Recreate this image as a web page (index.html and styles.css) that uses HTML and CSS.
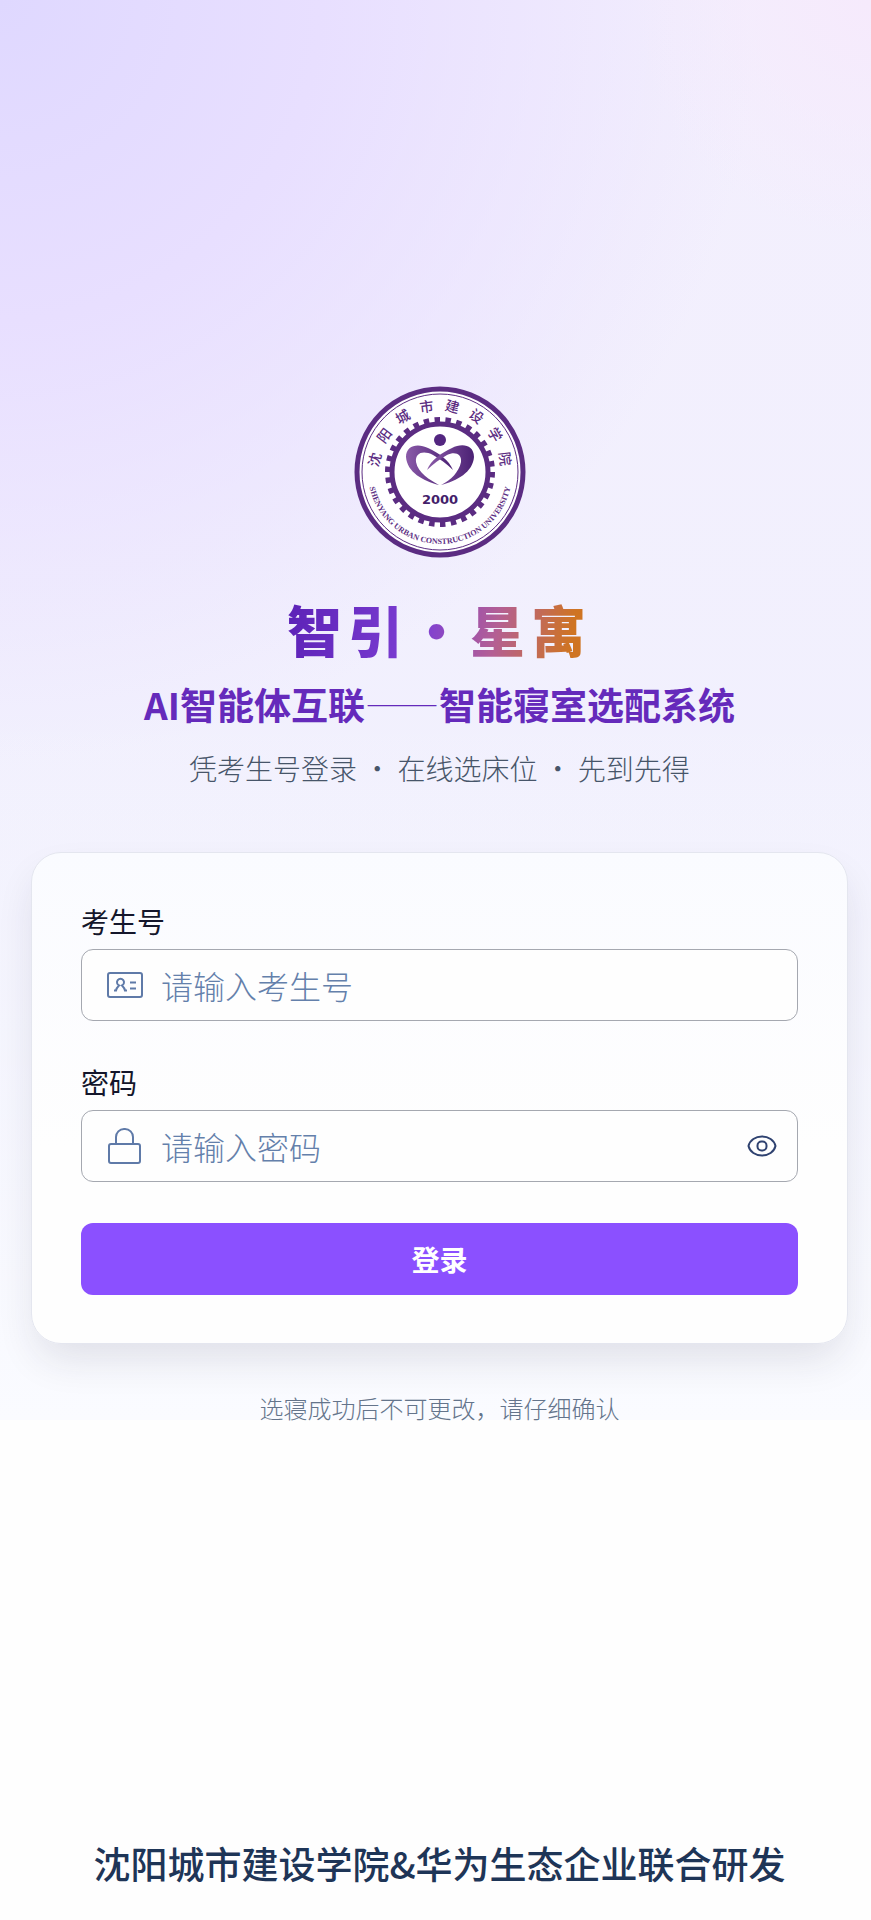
FILE: index.html
```html
<!DOCTYPE html>
<html lang="zh-CN">

<head>
    <meta charset="UTF-8">
    <meta name="viewport" content="width=device-width, initial-scale=1.0">
    <title>智引·星寓</title>
    <link rel="stylesheet" href="styles.css">
</head>

<body>
    <main class="login-page">
        <header class="brand">
            <svg class="brand-logo" viewBox="0 0 172 172" role="img" aria-label="沈阳城市建设学院">
                <defs>
                    <path id="arcTop" d="M 25.5 93.5 A 61 61 0 1 1 146.5 93.5" />
                    <path id="arcBottom" d="M 14 86 A 72 72 0 0 0 158 86" />
                    <linearGradient id="heart" x1="0" y1="0" x2="1" y2="0">
                        <stop offset="0" stop-color="#8a5aa8" />
                        <stop offset="1" stop-color="#4b2174" />
                    </linearGradient>
                </defs>
                <circle cx="86" cy="86" r="83" fill="#fff" stroke="#5b2c82" stroke-width="5" />
                <circle cx="86" cy="86" r="78" fill="none" stroke="#5b2c82" stroke-width="1" />
                <circle class="gear-teeth" cx="86" cy="86" r="52" pathLength="240" />
                <circle cx="86" cy="86" r="48" fill="#fff" stroke="#5b2c82" stroke-width="5" />
                <circle cx="86" cy="54" r="6" fill="#532680" />
                <path fill="url(#heart)" d="M85 99 C69 95 53 86 52 71 C52 59 64 57 74 62 C85 67 95 74 99 84 C93 78 86 73 79 69 C69 64 61 67 62 76 C64 87 76 94 85 99 Z" />
                <path fill="url(#heart)" d="M87 99 C103 95 119 86 120 71 C120 58 107 57 98 62 C87 67 77 74 73 84 C79 78 86 73 93 69 C101 65 108 68 107 76 C105 86 97 94 87 99 Z" />
                <text class="logo-year" x="86" y="118">2000</text>
                <text class="logo-cn"><textPath href="#arcTop" startOffset="52%">沈阳城市建设学院</textPath></text>
                <text class="logo-en"><textPath href="#arcBottom" startOffset="50%">SHENYANG URBAN CONSTRUCTION UNIVERSITY</textPath></text>
            </svg>
            <h1 class="brand-title">智引·星寓</h1>
            <p class="brand-subtitle">AI智能体互联<span class="dash">——</span>智能寝室选配系统</p>
            <p class="brand-desc">凭考生号登录 · 在线选床位 · 先到先得</p>
        </header>

        <form class="login-card">
            <div class="field">
                <label for="examNo">考生号</label>
                <div class="input-box">
                    <svg class="icon" viewBox="0 0 36 36" aria-hidden="true">
                        <rect x="1" y="6" width="34" height="24" rx="2" />
                        <path d="M7 23.500h2c.5-3 2-4 3-5a3.500 3.500 0 1 1 3 0c1 1 2.500 2 3 5h2M23 15.500h6M23 21.500h6" />
                    </svg>
                    <input type="text" id="examNo" placeholder="请输入考生号">
                </div>
            </div>
            <div class="field">
                <label for="password">密码</label>
                <div class="input-box">
                    <svg class="icon" viewBox="0 0 36 36" aria-hidden="true">
                        <rect x="2" y="16" width="31" height="19" rx="2" />
                        <path d="M9 16V9a8 8 0 0 1 8-8h1a8 8 0 0 1 8 8v7" />
                    </svg>
                    <input type="password" id="password" placeholder="请输入密码">
                    <button type="button" class="eye-btn" aria-label="显示密码">
                        <svg viewBox="0 0 30 30" aria-hidden="true">
                            <path d="M1.500 15C3 9 8.500 5.500 15 5.500S27 9 28.500 15C27 21 21.500 24.500 15 24.500S3 21 1.500 15Z" />
                            <rect x="10.500" y="10.500" width="9" height="9" rx="4" />
                        </svg>
                    </button>
                </div>
            </div>
            <button type="submit" class="login-btn">登录</button>
        </form>

        <p class="hint">选寝成功后不可更改，请仔细确认</p>
    </main>

    <footer class="page-footer">沈阳城市建设学院&amp;华为生态企业联合研发</footer>
</body>

</html>
```

FILE: styles.css
```css
* {
    box-sizing: border-box;
}

body {
    margin: 0;
    min-height: 100vh;
    display: flex;
    flex-direction: column;
    background: #fefefe;
    font-family: "Noto Sans CJK SC", sans-serif;
    color: #1e293b;
}

h1,
p {
    margin: 0;
}

.login-page {
    padding: 386px 23px 0 31px;
    background:
        linear-gradient(to bottom, rgba(250, 251, 255, 0) 50%, #fafbff 100%),
        radial-gradient(circle at 100% 0, #f6eafc 0, rgba(246, 234, 252, 0) 240px),
        radial-gradient(circle at 0 0, #dfd8ff 0, #e8dfff 320px, rgba(240, 236, 254, 0) 760px),
        linear-gradient(to bottom, #f3effd, #f0f1fe);
}

.brand {
    display: flex;
    flex-direction: column;
    align-items: center;
    text-align: center;
}

.brand-logo {
    width: 172px;
    height: 172px;
}

.gear-teeth {
    fill: none;
    stroke: #5b2c82;
    stroke-width: 6;
    stroke-dasharray: 4 4;
}

.logo-year {
    font: bold 13px "DejaVu Sans", sans-serif;
    fill: #43206a;
    text-anchor: middle;
}

.logo-cn {
    font-size: 14px;
    font-weight: 500;
    letter-spacing: 10px;
    fill: #5b2c82;
    text-anchor: middle;
}

.logo-en {
    font: bold 8px "Liberation Serif", serif;
    fill: #5b2c82;
    text-anchor: middle;
}

.brand-title {
    margin-top: 30px;
    font-size: 55px;
    font-weight: 900;
    line-height: 80px;
    letter-spacing: 6px;
    background: linear-gradient(100deg, #5b21b6 0%, #7e3fd4 45%, #b45f93 68%, #cf7422 92%);
    -webkit-background-clip: text;
    background-clip: text;
    color: transparent;
}

.brand-subtitle {
    margin-top: 8px;
    font-size: 37px;
    font-weight: 700;
    line-height: 56px;
    color: #652abb;
}

.dash {
    font-weight: 100;
}

.brand-desc {
    margin-top: 16px;
    font-size: 28px;
    font-weight: 300;
    line-height: 40px;
    color: #475569;
}

.login-card {
    display: flex;
    flex-direction: column;
    gap: 41px;
    margin-top: 64px;
    padding: 48px 49px;
    border: 1px solid #e4e6ef;
    border-radius: 30px;
    background: linear-gradient(to bottom, #fafbff, #fefefe 60%);
    box-shadow: 0 20px 40px -6px rgba(30, 35, 60, 0.12);
}

.field {
    display: flex;
    flex-direction: column;
    gap: 8px;
}

.field label {
    font-size: 28px;
    line-height: 40px;
    color: #14162b;
}

.input-box {
    display: flex;
    align-items: center;
    gap: 18px;
    height: 72px;
    padding: 0 20px 0 25px;
    border: 1px solid #a5a8b0;
    border-radius: 12px;
    background: #fefefe;
}

.icon {
    width: 36px;
    height: 36px;
    flex-shrink: 0;
    fill: none;
    stroke: #5f7aa8;
    stroke-width: 2;
}

.input-box input {
    flex: 1;
    min-width: 0;
    height: 100%;
    padding: 0;
    border: 0;
    outline: 0;
    background: transparent;
    font-family: inherit;
    font-size: 32px;
    font-weight: 300;
    color: #1e293b;
}

.input-box input::placeholder {
    color: #6480ab;
}

.eye-btn {
    display: flex;
    padding: 0;
    border: 0;
    background: none;
}

.eye-btn svg {
    width: 30px;
    height: 30px;
    fill: none;
    stroke: #2f4270;
    stroke-width: 2;
}

.login-btn {
    height: 72px;
    border: 0;
    border-radius: 12px;
    background: #8b50ff;
    color: #fff;
    font-family: inherit;
    font-size: 28px;
    font-weight: 700;
}

.hint {
    margin-top: 52px;
    font-size: 24px;
    font-weight: 300;
    line-height: 24px;
    text-align: center;
    color: #64748b;
}

.page-footer {
    margin-top: auto;
    padding: 0 23px 30px 31px;
    font-size: 37px;
    font-weight: 500;
    line-height: 54px;
    text-align: center;
    color: #1e3557;
}
```
